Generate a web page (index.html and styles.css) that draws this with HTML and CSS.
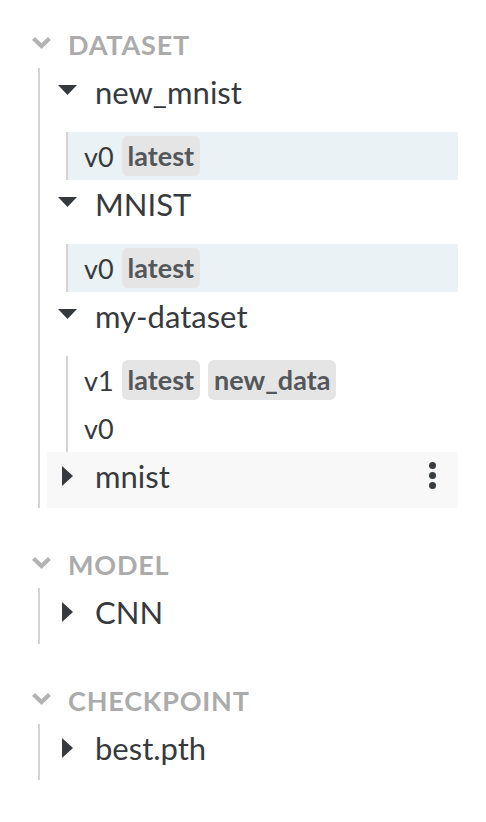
FILE: index.html
```html
<!DOCTYPE html>
<html>
<head>
<meta charset="utf-8">
<link rel="stylesheet" href="styles.css">
</head>
<body>
<div class="tree">
  <section class="group">
    <div class="group-head">
      <svg class="chev" viewBox="0 0 21 13"><path d="M2.5 2.5 L10.5 10 L18.5 2.5" fill="none" stroke="currentColor" stroke-width="4.2"/></svg>
      <span class="group-title">DATASET</span>
    </div>
    <div class="group-body">
      <div class="item">
        <div class="item-head">
          <span class="caret"><svg class="down" viewBox="0 0 19 10"><path d="M0 0 H19 L9.5 10 Z"/></svg></span>
          <span class="item-name">new_mnist</span>
        </div>
        <div class="versions">
          <div class="version selected"><span class="vnum">v0</span><span class="tag">latest</span></div>
        </div>
      </div>
      <div class="item">
        <div class="item-head">
          <span class="caret"><svg class="down" viewBox="0 0 19 10"><path d="M0 0 H19 L9.5 10 Z"/></svg></span>
          <span class="item-name">MNIST</span>
        </div>
        <div class="versions">
          <div class="version selected"><span class="vnum">v0</span><span class="tag">latest</span></div>
        </div>
      </div>
      <div class="item">
        <div class="item-head">
          <span class="caret"><svg class="down" viewBox="0 0 19 10"><path d="M0 0 H19 L9.5 10 Z"/></svg></span>
          <span class="item-name">my-dataset</span>
        </div>
        <div class="versions">
          <div class="version"><span class="vnum">v1</span><span class="tag">latest</span><span class="tag">new_data</span></div>
          <div class="version"><span class="vnum">v0</span></div>
        </div>
      </div>
      <div class="item closed hovered">
        <div class="item-head">
          <span class="caret"><svg class="right" viewBox="0 0 11 20"><path d="M0 0 L11 10 L0 20 Z"/></svg></span>
          <span class="item-name">mnist</span>
          <span class="kebab"><i></i><i></i><i></i></span>
        </div>
      </div>
    </div>
  </section>

  <section class="group">
    <div class="group-head">
      <svg class="chev" viewBox="0 0 21 13"><path d="M2.5 2.5 L10.5 10 L18.5 2.5" fill="none" stroke="currentColor" stroke-width="4.2"/></svg>
      <span class="group-title">MODEL</span>
    </div>
    <div class="group-body">
      <div class="item closed">
        <div class="item-head">
          <span class="caret"><svg class="right" viewBox="0 0 11 20"><path d="M0 0 L11 10 L0 20 Z"/></svg></span>
          <span class="item-name">CNN</span>
        </div>
      </div>
    </div>
  </section>

  <section class="group">
    <div class="group-head">
      <svg class="chev" viewBox="0 0 21 13"><path d="M2.5 2.5 L10.5 10 L18.5 2.5" fill="none" stroke="currentColor" stroke-width="4.2"/></svg>
      <span class="group-title">CHECKPOINT</span>
    </div>
    <div class="group-body">
      <div class="item closed">
        <div class="item-head">
          <span class="caret"><svg class="right" viewBox="0 0 11 20"><path d="M0 0 L11 10 L0 20 Z"/></svg></span>
          <span class="item-name">best.pth</span>
        </div>
      </div>
    </div>
  </section>
</div>
</body>
</html>
```

FILE: styles.css
```css
* { box-sizing: border-box; }

html, body {
  margin: 0;
  padding: 0;
  background: #ffffff;
}

body {
  font-family: "Lato", "Noto Sans", sans-serif;
  color: #363a3e;
}

.tree {
  padding-top: 20px;
  width: 458px;
}

.group {
  margin-bottom: 32px;
}

.group-head {
  display: flex;
  align-items: center;
  height: 48px;
  padding-left: 31px;
  gap: 16px;
}

.chev {
  width: 21px;
  height: 13px;
  color: #b3b3b3;
  flex: none;
  margin-top: -3px;
}

.group-title {
  font-size: 27px;
  font-weight: 700;
  color: #ababab;
  letter-spacing: 0.8px;
}

.group-body {
  margin-left: 38px;
  border-left: 2px solid #d4d4d4;
  padding-left: 7px;
}

.item-head {
  display: flex;
  align-items: center;
  height: 48px;
}

.caret {
  width: 20px;
  margin-left: 10px;
  margin-right: 18px;
  display: flex;
  justify-content: center;
  align-items: center;
  flex: none;
}

.caret svg { fill: #363a3e; display: block; }
.caret .down { width: 19px; height: 10px; margin-top: -4px; }
.caret .right { width: 11px; height: 20px; }

.item-name {
  font-size: 31px;
  flex: 1;
}

.item.closed {
  padding-bottom: 8px;
}

.item.hovered {
  background: #f8f8f8;
}

.kebab {
  display: flex;
  flex-direction: column;
  align-items: center;
  gap: 3px;
  width: 20px;
  margin-right: 16px;
  margin-top: -2px;
}

.kebab i {
  display: block;
  width: 7px;
  height: 7px;
  border-radius: 50%;
  background: #3a3d40;
}

.versions {
  margin-top: 16px;
  margin-left: 19px;
  border-left: 2px solid #d4d4d4;
}

.version {
  display: flex;
  align-items: center;
  height: 48px;
  padding-left: 16px;
  gap: 8px;
}

.version.selected {
  background: #eaf2f5;
}

.vnum {
  font-size: 27px;
}

.tag {
  font-size: 27px;
  font-weight: 700;
  color: #54575a;
  background: #e5e5e5;
  border-radius: 6px;
  height: 40px;
  line-height: 40px;
  padding: 0 6px;
}
```
